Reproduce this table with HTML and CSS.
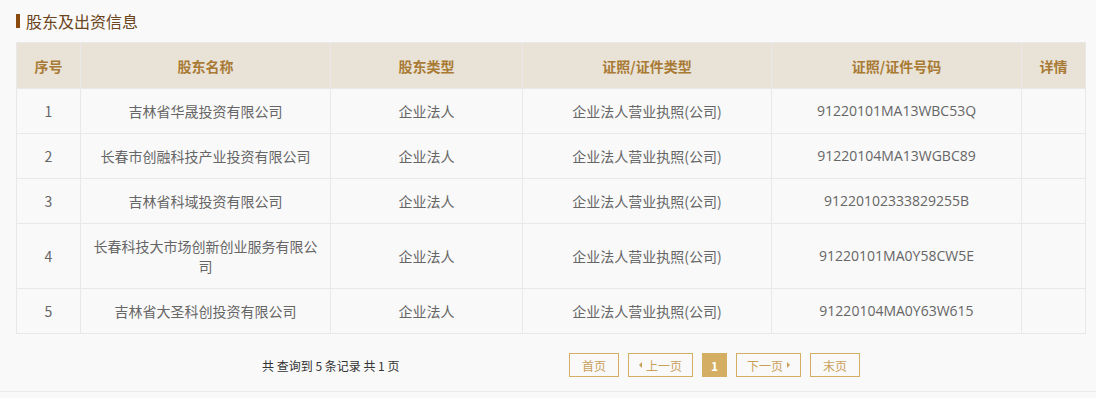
FILE: index.html
```html
<!DOCTYPE html>
<html lang="zh-CN">
<head>
<meta charset="utf-8">
<link rel="stylesheet" href="styles.css">
</head>
<body>
<div class="panel">
  <h2 class="title"><span class="mark"></span>股东及出资信息</h2>
  <table class="grid">
    <colgroup>
      <col class="c1"><col class="c2"><col class="c3"><col class="c4"><col class="c5"><col class="c6">
    </colgroup>
    <thead>
      <tr><th>序号</th><th>股东名称</th><th>股东类型</th><th>证照/证件类型</th><th>证照/证件号码</th><th>详情</th></tr>
    </thead>
    <tbody>
      <tr><td>1</td><td>吉林省华晟投资有限公司</td><td>企业法人</td><td>企业法人营业执照(公司)</td><td class="num">91220101MA13WBC53Q</td><td></td></tr>
      <tr><td>2</td><td>长春市创融科技产业投资有限公司</td><td>企业法人</td><td>企业法人营业执照(公司)</td><td class="num">91220104MA13WGBC89</td><td></td></tr>
      <tr><td>3</td><td>吉林省科域投资有限公司</td><td>企业法人</td><td>企业法人营业执照(公司)</td><td class="num">91220102333829255B</td><td></td></tr>
      <tr class="tall"><td>4</td><td>长春科技大市场创新创业服务有限公司</td><td>企业法人</td><td>企业法人营业执照(公司)</td><td class="num">91220101MA0Y58CW5E</td><td></td></tr>
      <tr><td>5</td><td>吉林省大圣科创投资有限公司</td><td>企业法人</td><td>企业法人营业执照(公司)</td><td class="num">91220104MA0Y63W615</td><td></td></tr>
    </tbody>
  </table>
  <div class="pager">
    <div class="summary">共 查询到 5 条记录 共 1 页</div>
    <div class="btns">
      <span class="btn w50">首页</span>
      <span class="btn w65"><span class="tri left"></span>上一页</span>
      <span class="btn cur">1</span>
      <span class="btn w65">下一页<span class="tri right"></span></span>
      <span class="btn w50">末页</span>
    </div>
  </div>
</div>
</body>
</html>
```
FILE: styles.css
```css
html, body {
  margin: 0;
  padding: 0;
  background: #f9f9f9;
}
body {
  font-family: "Noto Sans CJK SC", "Noto Sans", sans-serif;
  color: #666;
}
.panel {
  width: 1096px;
  height: 392px;
  border-bottom: 1px solid #ebebeb;
  box-sizing: border-box;
}
.title {
  margin: 0;
  padding: 10px 0 0 16px;
  height: 32px;
  box-sizing: border-box;
  display: flex;
  align-items: center;
  font-size: 16px;
  font-weight: normal;
  color: #6b4420;
  line-height: 20px;
}
.mark {
  display: inline-block;
  width: 4px;
  height: 14px;
  background: #8a4a0e;
  margin-right: 6px;
}
.grid {
  margin: 10px 0 0 16px;
  width: 1070px;
  border-collapse: collapse;
  table-layout: fixed;
  font-size: 14px;
}
.c1 { width: 64px; }
.c2 { width: 250px; }
.c3 { width: 192px; }
.c4 { width: 249px; }
.c5 { width: 250px; }
.c6 { width: 64px; }
.grid th, .grid td {
  border: 1px solid #e8e8e8;
  text-align: center;
  vertical-align: middle;
  padding: 0 10px;
  line-height: 20px;
}
.grid th {
  background: #e9e2d7;
  color: #a87a34;
  font-weight: bold;
  height: 45px;
  font-size: 14px;
}
.grid td {
  height: 44px;
  color: #666;
}
.grid td.num {
  font-family: "Open Sans", "Noto Sans CJK SC", sans-serif;
}
.grid tr.tall td {
  height: 64px;
}
.pager {
  display: flex;
  align-items: center;
  margin-top: 19px;
}
.summary {
  margin-left: 262px;
  width: 307px;
  font-size: 12px;
  color: #333;
}
.btns {
  display: flex;
  gap: 9px;
}
.btn {
  height: 24px;
  box-sizing: border-box;
  border: 1px solid #d4ae63;
  color: #c9a05a;
  font-size: 12px;
  display: flex;
  align-items: center;
  justify-content: center;
  gap: 4px;
}
.w50 { width: 50px; }
.w65 { width: 65px; }
.cur {
  width: 25px;
  background: #d4ae63;
  color: #fff;
  font-weight: bold;
}
.tri {
  width: 0;
  height: 0;
  border-top: 3px solid transparent;
  border-bottom: 3px solid transparent;
}
.tri.left { border-right: 3px solid #c9a05a; }
.tri.right { border-left: 3px solid #c9a05a; }
```
